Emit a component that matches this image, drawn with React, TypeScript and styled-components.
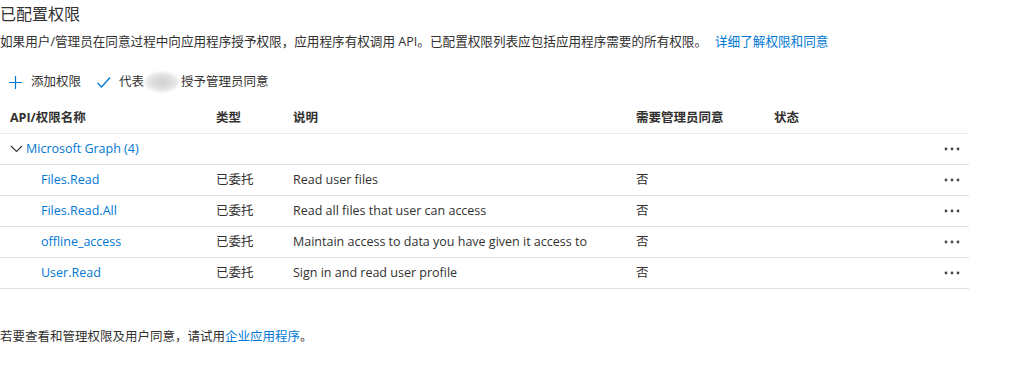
import React from "react";
import styled, {createGlobalStyle} from "styled-components";

type Permission = {
    name: string
    type: string
    description: string
    adminConsent: string
}

const permissions: Permission[] = [
    {name: "Files.Read", type: "已委托", description: "Read user files", adminConsent: "否"},
    {name: "Files.Read.All", type: "已委托", description: "Read all files that user can access", adminConsent: "否"},
    {name: "offline_access", type: "已委托", description: "Maintain access to data you have given it access to", adminConsent: "否"},
    {name: "User.Read", type: "已委托", description: "Sign in and read user profile", adminConsent: "否"},
]

const GlobalStyle = createGlobalStyle`
  body {
    margin: 0;
    background: #ffffff;
    font-family: "Segoe UI", "Open Sans", "Noto Sans CJK SC", sans-serif;
    color: #323130;
  }
`

const PlusIcon = () => (
    <svg width="15" height="15" viewBox="0 0 15 15">
        <path d="M7.5 1v13M1 7.5h13" stroke="#0078d4" strokeWidth="1.2" fill="none"/>
    </svg>
)

const CheckIcon = () => (
    <svg width="15" height="15" viewBox="0 0 15 15">
        <path d="M1.5 8l4 4L14 2.5" stroke="#0078d4" strokeWidth="1.3" fill="none"/>
    </svg>
)

const ChevronIcon = () => (
    <svg width="13" height="8" viewBox="0 0 13 8">
        <path d="M1 1l5.5 5.5L12 1" stroke="#323130" strokeWidth="1.1" fill="none"/>
    </svg>
)

const MoreIcon = () => (
    <svg width="16" height="4" viewBox="0 0 16 4">
        <circle cx="2" cy="2" r="1.4" fill="#484644"/>
        <circle cx="8" cy="2" r="1.4" fill="#484644"/>
        <circle cx="14" cy="2" r="1.4" fill="#484644"/>
    </svg>
)

export default function App() {
    return (
        <Page>
            <GlobalStyle/>
            <Title>已配置权限</Title>
            <Description>
                如果用户/管理员在同意过程中向应用程序授予权限，应用程序有权调用 API。已配置权限列表应包括应用程序需要的所有权限。
                <Link>详细了解权限和同意</Link>
            </Description>

            <Toolbar>
                <ToolButton>
                    <PlusIcon/>
                    <span>添加权限</span>
                </ToolButton>
                <ToolButton>
                    <CheckIcon/>
                    <span>代表<Redacted/>授予管理员同意</span>
                </ToolButton>
            </Toolbar>

            <Table>
                <HeaderRow>
                    <HeaderCell $indent={10}>API/权限名称</HeaderCell>
                    <HeaderCell>类型</HeaderCell>
                    <HeaderCell>说明</HeaderCell>
                    <HeaderCell>需要管理员同意</HeaderCell>
                    <HeaderCell>状态</HeaderCell>
                    <HeaderCell/>
                </HeaderRow>

                <Row>
                    <GroupCell>
                        <ChevronIcon/>
                        <Link>Microsoft Graph (4)</Link>
                    </GroupCell>
                    <ActionCell><MoreIcon/></ActionCell>
                </Row>

                {permissions.map(p => (
                    <Row key={p.name}>
                        <Cell $indent={41}><Link>{p.name}</Link></Cell>
                        <Cell>{p.type}</Cell>
                        <Cell>{p.description}</Cell>
                        <Cell>{p.adminConsent}</Cell>
                        <Cell/>
                        <ActionCell><MoreIcon/></ActionCell>
                    </Row>
                ))}
            </Table>

            <Footer>
                若要查看和管理权限及用户同意，请试用<Link>企业应用程序</Link>。
            </Footer>
        </Page>
    )
}

const Page = styled.div`
  padding-top: 3px;
  width: 1024px;
  height: 368px;
  box-sizing: border-box;
`
const Title = styled.h2`
  margin: 0;
  font-size: 16px;
  font-weight: 400;
  line-height: 22px;
`
const Description = styled.p`
  margin: 8px 0 0;
  font-size: 12.6px;
  line-height: 18px;
  white-space: nowrap;

  & > a {
    margin-left: 8px;
  }
`
const Link = styled.a`
  color: #0078d4;
  cursor: pointer;
`
const Toolbar = styled.div`
  display: flex;
  align-items: center;
  gap: 15px;
  height: 32px;
  margin-top: 15px;
  padding-left: 8px;
`
const ToolButton = styled.div`
  display: flex;
  align-items: center;
  gap: 8px;
  font-size: 12.5px;
  line-height: 18px;
`
const Redacted = styled.span`
  display: inline-block;
  width: 34px;
  height: 20px;
  margin: 0 2px 0 1px;
  vertical-align: -6px;
  border-radius: 50%;
  background: radial-gradient(ellipse at center, #cfcfcf 0%, #e4e4e4 55%, #ffffff 100%);
  filter: blur(1.5px);
`
const Table = styled.div`
  width: 969px;
  margin-top: 1px;
`
const gridColumns = "216px 77px 343px 138px 1fr 40px"

const HeaderRow = styled.div`
  display: grid;
  grid-template-columns: ${gridColumns};
  height: 34px;
  align-items: center;
  border-bottom: 1px solid #edebe9;
`
const HeaderCell = styled.div<{ $indent?: number }>`
  padding-left: ${p => p.$indent ?? 0}px;
  font-size: 12.5px;
  font-weight: 700;
  color: #323130;
`
const Row = styled.div`
  display: grid;
  grid-template-columns: ${gridColumns};
  height: 30px;
  padding-top: 1px;
  box-sizing: content-box;
  align-items: center;
  border-bottom: 1px solid #e1dfdd;
  font-size: 12.5px;
  line-height: 18px;
  margin-top: -1px;

  & + & {
    margin-top: 0;
    padding-top: 0;
  }
`
const Cell = styled.div<{ $indent?: number }>`
  padding-left: ${p => p.$indent ?? 0}px;
  white-space: nowrap;
`
const GroupCell = styled.div`
  grid-column: 1 / 6;
  display: flex;
  align-items: center;
  gap: 3px;
  padding-left: 10px;
`
const ActionCell = styled.div`
  display: flex;
  justify-content: flex-end;
  padding-right: 9px;
`
const Footer = styled.p`
  margin: 39px 0 0;
  font-size: 12.5px;
  line-height: 18px;
`
